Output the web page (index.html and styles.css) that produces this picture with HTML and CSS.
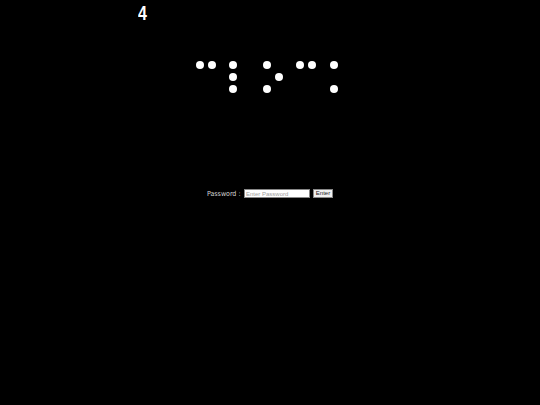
FILE: index.html
```html
<!DOCTYPE html>
<html>
<head>
<meta charset="utf-8">
<link rel="stylesheet" href="styles.css">
</head>
<body>
<div class="count"><span class="num">4</span></div>
<div class="braille">
  <div class="cell"><i class="on"></i><i class="on"></i><i></i><i></i><i></i><i></i></div>
  <div class="cell"><i class="on"></i><i></i><i class="on"></i><i></i><i class="on"></i><i></i></div>
  <div class="cell"><i class="on"></i><i></i><i></i><i class="on"></i><i class="on"></i><i></i></div>
  <div class="cell"><i class="on"></i><i class="on"></i><i></i><i></i><i></i><i></i></div>
  <div class="cell"><i class="on"></i><i></i><i></i><i></i><i class="on"></i><i></i></div>
</div>
<form class="login">
  <label class="lbl">Password<span class="colon">:</span></label>
  <input class="pw" type="password" placeholder="Enter Password">
  <button class="btn" type="button">Enter</button>
</form>
</body>
</html>
```
FILE: styles.css
```css
html, body {
  margin: 0;
  padding: 0;
  background: #000;
  width: 540px;
  height: 405px;
  overflow: hidden;
}
.count {
  margin-left: 138px;
  padding-top: 1px;
  height: 24px;
  color: #fff;
  font-family: "Liberation Sans", sans-serif;
  font-weight: bold;
  font-size: 19.5px;
  line-height: 24px;
}
.num {
  display: inline-block;
  transform: scaleX(0.82);
  transform-origin: left center;
}
.braille {
  display: flex;
  gap: 13.4px;
  margin-left: 196px;
  margin-top: 36px;
}
.cell {
  display: grid;
  grid-template-columns: 8px 8px;
  grid-auto-rows: 8px;
  column-gap: 4px;
  row-gap: 4px;
}
.cell i {
  display: block;
  width: 8px;
  height: 8px;
  border-radius: 50%;
}
.cell i.on {
  background: #fff;
}
.login {
  display: flex;
  align-items: center;
  margin: 95px 0 0 207px;
  height: 11px;
}
.lbl {
  color: #d8d8d8;
  font-family: "DejaVu Sans Condensed", "DejaVu Sans", sans-serif;
  font-size: 7px;
  white-space: nowrap;
  width: 37px;
}
.colon {
  margin-left: 2px;
}
.pw {
  box-sizing: border-box;
  width: 66px;
  height: 9px;
  padding: 0 1px;
  border: 1px solid #888;
  background: #fff;
  font-family: "Liberation Sans", sans-serif;
  font-size: 6px;
  margin: 0 3px 0 0;
}
.pw::placeholder {
  color: #a0a0a0;
}
.btn {
  box-sizing: border-box;
  width: 20px;
  height: 9px;
  padding: 0;
  border: 1px solid #888;
  background: #f0f0f0;
  color: #222;
  font-family: "Liberation Sans", sans-serif;
  font-size: 6px;
  line-height: 7px;
  margin: 0;
}
```
